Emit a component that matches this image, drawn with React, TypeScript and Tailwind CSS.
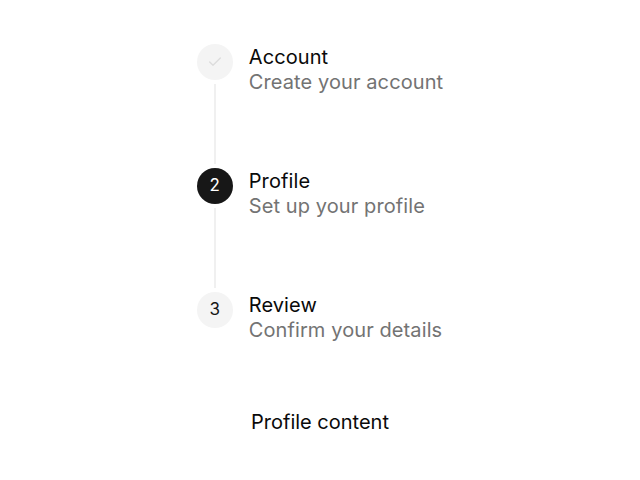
import { Check } from 'lucide-react'

const steps = [
  { title: 'Account', description: 'Create your account', status: 'done' },
  { title: 'Profile', description: 'Set up your profile', status: 'active' },
  { title: 'Review', description: 'Confirm your details', status: 'todo' },
]

export default function App() {
  return (
    <div
      className="w-[640px] h-[480px] bg-white flex flex-col items-center pt-[44px]"
      style={{ fontFamily: 'Inter, "Liberation Sans", sans-serif' }}
    >
      <div className="flex flex-col">
        {steps.map((step, index) => (
          <div key={step.title} className="flex gap-4">
            <div className="flex flex-col items-center">
              {step.status === 'done' && (
                <div className="w-9 h-9 rounded-full bg-[#f4f4f4] flex items-center justify-center">
                  <Check className="w-4 h-4 text-[#dcdcdc]" strokeWidth={2} />
                </div>
              )}
              {step.status === 'active' && (
                <div className="w-9 h-9 rounded-full bg-[#171717] text-white flex items-center justify-center text-[17px]">
                  {index + 1}
                </div>
              )}
              {step.status === 'todo' && (
                <div className="w-9 h-9 rounded-full bg-[#f4f4f4] text-[#171717] flex items-center justify-center text-[17px]">
                  {index + 1}
                </div>
              )}
              {index < steps.length - 1 && (
                <div className="w-[2px] h-[80px] my-1 bg-[#f0f0f0]" />
              )}
            </div>
            <div className="flex flex-col pt-[1px] text-[20px] leading-[25px] tracking-[0.1px]">
              <span className="text-[#0a0a0a]">{step.title}</span>
              <span className="text-[#737373]">{step.description}</span>
            </div>
          </div>
        ))}
      </div>
      <div className="mt-[65px] text-[20px] leading-[28px] text-[#0a0a0a]">Profile content</div>
    </div>
  )
}
